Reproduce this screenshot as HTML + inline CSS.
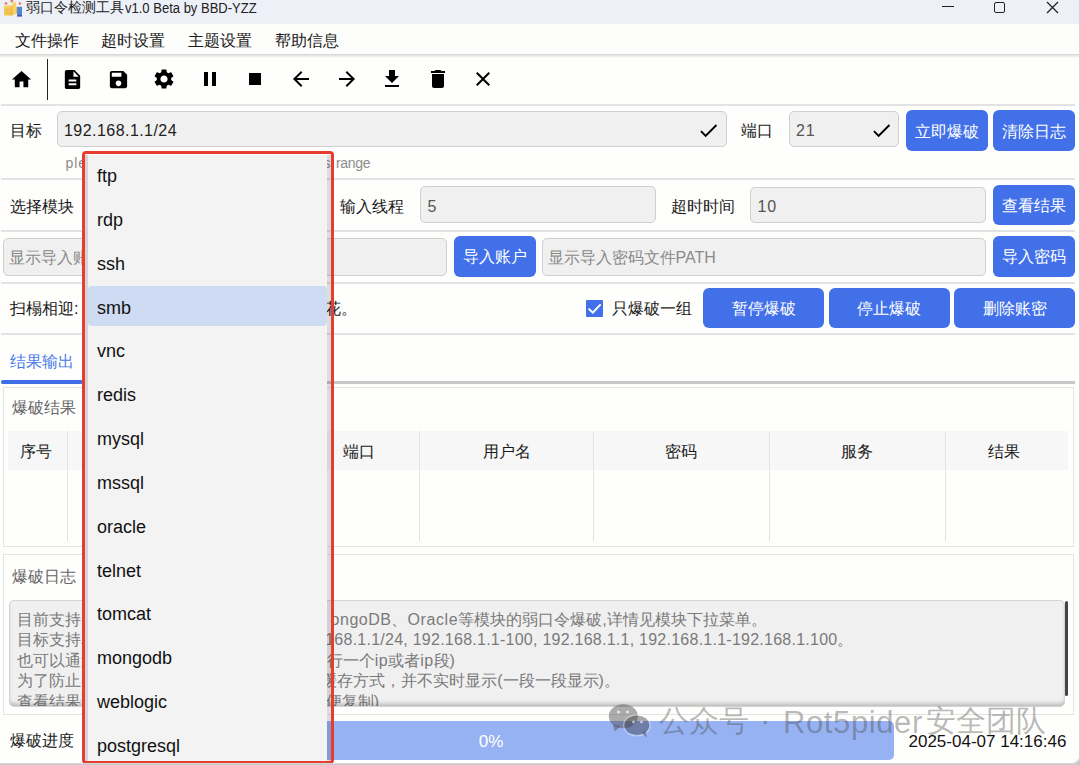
<!DOCTYPE html>
<html><head><meta charset="utf-8">
<style>
*{box-sizing:border-box;margin:0;padding:0}
html,body{width:1080px;height:765px;overflow:hidden;background:#fefefd;font-family:"Liberation Sans",sans-serif;color:#1a1a1a}
.a{position:absolute;white-space:nowrap}
.t{font-size:16px;line-height:20px}
.sep{position:absolute;left:1px;width:1074px;height:2px;background:#e3e3e3}
.inp{position:absolute;background:#f0f0f0;border:1px solid #cfcfcf;border-radius:5px}
.btn{position:absolute;background:#4170e8;border-radius:6px;color:#fff;font-size:16px;line-height:20px;text-align:center}
.ic{position:absolute}
.ph{color:#8a8a8a}
.hd{position:absolute;font-size:16px;line-height:20px;text-align:center}
.vl{position:absolute;top:431px;width:1px;height:110px;background:#e2e2e2}
.log{position:absolute;font-size:16px;line-height:20px;color:#7a7a7a}
.it{position:absolute;left:97px;font-size:18px;line-height:20px;letter-spacing:0px;color:#111}
</style></head><body>
<div class="a" style="left:0px;top:0px;width:1080px;height:23.7px;background:#edf0f6"></div>
<svg class="ic" style="left:0;top:0" width="24" height="18" viewBox="0 0 24 18">
<path d="M6 1.6l.7 1.1 1.2.7-1.2.7-.7 1.1-.7-1.1-1.2-.7 1.2-.7z" fill="#ec6b4d"/>
<path d="M11.8 -.8l.7 1.1 1.2.7-1.2.7-.7 1.1-.7-1.1-1.2-.7 1.2-.7z" fill="#ec6b4d"/>
<path d="M19.9 1.7l.6 1.1 1.1.7-1.1.7-.6 1.1-.6-1.1-1.1-.7 1.1-.7z" fill="#ec6b4d"/>
<rect x="4" y="5.6" width="9" height="10.1" rx="1.5" fill="#f5cf5c"/>
<path d="M12.3 14.4V4c0-1.2.9-2 1.9-2s2 .8 2 2v10.4z" fill="#f6d362"/>
<rect x="16.2" y="7" width="0.9" height="6.6" fill="#f0a83a"/>
<path d="M4.3 9.3h7.6M4.5 11.4h7.4M4.5 13.6h7.4" stroke="#ef9f45" stroke-width=".7"/>
<rect x="11.6" y="5.6" width=".8" height="10" fill="#efa447"/>
<rect x="17.1" y="6.8" width="4.9" height="8.2" fill="#4e86d8"/>
<rect x="17.1" y="14.9" width="4.9" height="1.7" fill="#4850a8"/>
</svg>
<div class="a a" style="left:26px;top:-1px;font-size:14px;line-height:16px;color:#222">弱口令检测工具</div>
<div class="a a" style="left:125.3px;top:0px;font-size:14px;line-height:16px;color:#222"><span style="display:inline-block;transform:scaleX(0.93);transform-origin:0 0">v1.0 Beta by BBD-YZZ</span></div>
<div class="a" style="left:942px;top:6px;width:12px;height:1.3px;background:#222"></div>
<div class="a" style="left:994px;top:2px;width:11px;height:11px;border:1.3px solid #222;border-radius:2px"></div>
<svg class="ic" style="left:1046px;top:1px" width="13" height="13" viewBox="0 0 13 13"><path d="M1 1L12 12M12 1L1 12" stroke="#222" stroke-width="1.3"/></svg>
<div class="a" style="left:0px;top:23.7px;width:1080px;height:30.3px;background:#fdfdfb"></div>
<div class="a" style="left:0px;top:53.7px;width:1080px;height:4.3px;background:linear-gradient(#d2d2d2,#e6e6e6 40%,#fefefd)"></div>
<div class="a t" style="left:15px;top:31px;">文件操作</div>
<div class="a t" style="left:101.3px;top:31px;">超时设置</div>
<div class="a t" style="left:188.3px;top:31px;">主题设置</div>
<div class="a t" style="left:275px;top:31px;">帮助信息</div>
<svg class="ic" style="left:10.0px;top:68.1px" width="23" height="23" viewBox="0 0 24 24"><path fill="#000" d="M10 20v-6h4v6h5v-8h3L12 3 2 12h3v8z"/></svg>
<svg class="ic" style="left:61.4px;top:67.65px" width="23" height="23" viewBox="0 0 24 24"><path fill="#000" d="M14 2H6c-1.1 0-1.99.9-1.99 2L4 20c0 1.1.89 2 1.99 2H18c1.1 0 2-.9 2-2V8l-6-6zm2 16H8v-2h8v2zm0-4H8v-2h8v2zm-3-5V3.5L18.5 9H13z"/></svg>
<svg class="ic" style="left:107.0px;top:67.75px" width="23" height="23" viewBox="0 0 24 24"><path fill="#000" d="M17 3H5c-1.11 0-2 .9-2 2v14c0 1.1.89 2 2 2h14c1.1 0 2-.9 2-2V7l-4-4zm-5 16c-1.66 0-3-1.34-3-3s1.34-3 3-3 3 1.34 3 3-1.34 3-3 3zm3-10H5V5h10v4z"/></svg>
<svg class="ic" style="left:152.2px;top:67.0px" width="24" height="24" viewBox="0 0 24 24"><path fill="#000" d="M19.14 12.94c.04-.3.06-.61.06-.94 0-.32-.02-.64-.07-.94l2.03-1.58c.18-.14.23-.41.12-.61l-1.92-3.32c-.12-.22-.37-.29-.59-.22l-2.39.96c-.5-.38-1.03-.7-1.620-.94l-.36-2.54c-.04-.24-.24-.41-.48-.41h-3.84c-.24 0-.43.17-.47.41l-.36 2.54c-.59.24-1.13.57-1.62.94l-2.39-.96c-.22-.08-.47 0-.59.22L2.74 8.87c-.12.21-.08.47.12.61l2.03 1.58c-.05.3-.09.63-.09.94s.02.64.07.94l-2.03 1.58c-.18.14-.23.41-.12.61l1.92 3.32c.12.22.37.29.59.22l2.39-.96c.5.38 1.03.7 1.62.94l.36 2.54c.05.24.24.41.48.41h3.840c.24 0 .44-.17.47-.41l.36-2.54c.59-.24 1.13-.56 1.62-.94l2.39.96c.22.08.47 0 .59-.22l1.92-3.32c.12-.22.07-.47-.12-.61l-2.01-1.58zM12 15.6c-1.98 0-3.6-1.62-3.6-3.6s1.62-3.6 3.6-3.6 3.6 1.62 3.6 3.6-1.62 3.6-3.6 3.6z"/></svg>
<svg class="ic" style="left:197.85px;top:67.0px" width="24" height="24" viewBox="0 0 24 24"><path fill="#000" d="M6 19h4V5H6v14zm8-14v14h4V5h-4z"/></svg>
<svg class="ic" style="left:243.45px;top:67.0px" width="24" height="24" viewBox="0 0 24 24"><path fill="#000" d="M6 6h12v12H6z"/></svg>
<svg class="ic" style="left:289.05px;top:67.0px" width="24" height="24" viewBox="0 0 24 24"><path fill="#000" d="M20 11H7.830l5.59-5.59L12 4l-8 8 8 8 1.41-1.41L7.83 13H20v-2z"/></svg>
<svg class="ic" style="left:334.5px;top:67.0px" width="24" height="24" viewBox="0 0 24 24"><path fill="#000" d="M12 4l-1.41 1.41L16.17 11H4v2h12.17l-5.58 5.59L12 20l8-8z"/></svg>
<svg class="ic" style="left:380.0px;top:67.0px" width="24" height="24" viewBox="0 0 24 24"><path fill="#000" d="M19 9h-4V3H9v6H5l7 7 7-7zM5 18v2h14v-2H5z"/></svg>
<svg class="ic" style="left:425.7px;top:67.0px" width="24" height="24" viewBox="0 0 24 24"><path fill="#000" d="M6 19c0 1.1.9 2 2 2h8c1.1 0 2-.9 2-2V7H6v12zM19 4h-3.5l-1-1h-5l-1 1H5v2h14V4z"/></svg>
<svg class="ic" style="left:471.35px;top:67.0px" width="24" height="24" viewBox="0 0 24 24"><path fill="#000" d="M19 6.41L17.59 5 12 10.59 6.41 5 5 6.41 10.59 12 5 17.59 6.41 19 12 13.41 17.59 19 19 17.59 13.41 12z"/></svg>
<div class="a" style="left:47px;top:59px;width:1.3px;height:41px;background:#222"></div>
<div class="sep" style="top:103.5px"></div>
<div class="a t" style="left:10px;top:121px;">目标</div>
<div class="inp" style="left:57px;top:111px;width:670px;height:36px"></div>
<div class="a t" style="left:64px;top:121px;color:#222;letter-spacing:.45px">192.168.1.1/24</div>
<svg class="ic" style="left:697px;top:118.5px" width="23" height="23" viewBox="0 0 24 24"><path fill="#000" d="M9 16.17L4.83 12l-1.42 1.41L9 19 21 7l-1.41-1.41z"/></svg>
<div class="a t" style="left:741px;top:121px;">端口</div>
<div class="inp" style="left:789px;top:111px;width:110px;height:36px"></div>
<div class="a t" style="left:796px;top:121px;color:#555;letter-spacing:.8px">21</div>
<svg class="ic" style="left:869.5px;top:118.5px" width="23" height="23" viewBox="0 0 24 24"><path fill="#000" d="M9 16.17L4.83 12l-1.42 1.41L9 19 21 7l-1.41-1.41z"/></svg>
<div class="btn" style="left:906px;top:110px;width:82px;height:41px;padding-top:12px">立即爆破</div>
<div class="btn" style="left:993px;top:110px;width:82px;height:41px;padding-top:12px">清除日志</div>
<div class="a a" style="left:65.6px;top:155px;font-size:14px;line-height:16px;letter-spacing:.9px;color:#8c8c8c">please input ip addres</div>
<div class="a a" style="left:323.5px;top:155px;font-size:14px;line-height:16px;color:#8c8c8c">s</div>
<div class="a a" style="left:336px;top:155px;font-size:14px;line-height:16px;letter-spacing:-.3px;color:#8c8c8c">range</div>
<div class="sep" style="top:178.2px"></div>
<div class="a t" style="left:9.5px;top:197px;">选择模块</div>
<div class="a t" style="left:339.5px;top:197px;">输入线程</div>
<div class="inp" style="left:419.5px;top:186px;width:236px;height:37px"></div>
<div class="a t" style="left:427.5px;top:197px;color:#555">5</div>
<div class="a t" style="left:670.5px;top:197px;">超时时间</div>
<div class="inp" style="left:750px;top:186.5px;width:236px;height:36px"></div>
<div class="a t" style="left:757.5px;top:197px;color:#555;letter-spacing:.8px">10</div>
<div class="btn" style="left:993px;top:185px;width:82px;height:40px;padding-top:10.5px">查看结果</div>
<div class="sep" style="top:230px"></div>
<div class="inp" style="left:2.5px;top:237.5px;width:444.5px;height:38px"></div>
<div class="a t ph" style="left:9px;top:248px;">显示导入账户文件PATH</div>
<div class="btn" style="left:453.5px;top:236px;width:82px;height:41px;padding-top:11px">导入账户</div>
<div class="inp" style="left:541.5px;top:237.5px;width:444.5px;height:38px"></div>
<div class="a t ph" style="left:547.5px;top:248px;">显示导入密码文件PATH</div>
<div class="btn" style="left:993px;top:236px;width:82px;height:41px;padding-top:11px">导入密码</div>
<div class="sep" style="top:281.5px"></div>
<div class="a t" style="left:10px;top:299px;">扫榻相迎: 欢迎</div>
<div class="a t" style="left:325px;top:299px;">花。</div>
<div class="a" style="left:586.3px;top:299.5px;width:17.2px;height:17.2px;background:#4170e8;border-radius:1px"></div>
<svg class="ic" style="left:586.3px;top:299.5px" width="17" height="17" viewBox="0 0 17 17"><path d="M2.6 8.6l4.2 4 7.8-8.2" stroke="#fff" stroke-width="2" fill="none"/></svg>
<div class="a t" style="left:611.5px;top:299px;">只爆破一组</div>
<div class="btn" style="left:703px;top:288px;width:121px;height:40px;padding-top:10.5px">暂停爆破</div>
<div class="btn" style="left:829px;top:288px;width:120.5px;height:40px;padding-top:10.5px">停止爆破</div>
<div class="btn" style="left:954px;top:288px;width:121px;height:40px;padding-top:10.5px">删除账密</div>
<div class="sep" style="top:332.5px"></div>
<div class="a t" style="left:10px;top:352px;color:#4a7aea">结果输出</div>
<div class="a" style="left:1px;top:380.5px;width:1074px;height:3.5px;background:#c8c8c8"></div>
<div class="a" style="left:1px;top:380px;width:82px;height:4px;background:#3f6fe6;border-radius:2px"></div>
<div class="a" style="left:2.5px;top:386.5px;width:1071px;height:160px;border:1px solid #e4e4e4"></div>
<div class="a t" style="left:12px;top:398px;color:#666">爆破结果</div>
<div class="a" style="left:8px;top:430.5px;width:1060px;height:39px;background:#f7f7f7"></div>
<div class="vl" style="left:67px"></div>
<div class="vl" style="left:298px"></div>
<div class="vl" style="left:418.5px"></div>
<div class="vl" style="left:593px"></div>
<div class="vl" style="left:769px"></div>
<div class="vl" style="left:944.5px"></div>
<div class="hd" style="left:6.7px;top:442.3px;width:59px">序号</div>
<div class="hd" style="left:67px;top:442.3px;width:231px">IP地址</div>
<div class="hd" style="left:298.8px;top:442.3px;width:121px">端口</div>
<div class="hd" style="left:419.5px;top:442.3px;width:174.5px">用户名</div>
<div class="hd" style="left:593.0px;top:442.3px;width:176.0px">密码</div>
<div class="hd" style="left:769.1px;top:442.3px;width:175.5px">服务</div>
<div class="hd" style="left:943px;top:442.3px;width:122px">结果</div>
<div class="a" style="left:2.5px;top:554px;width:1071px;height:161px;border:1px solid #e4e4e4"></div>
<div class="a t" style="left:12px;top:567px;color:#666">爆破日志</div>
<div class="a" style="left:9px;top:600px;width:1056px;height:107px;background:#f0f0f0;border-radius:5px"></div>
<div class="a" style="left:1065px;top:601px;width:3px;height:95px;background:#454545;border-radius:2px"></div>
<div class="a" style="left:9px;top:601px;width:1056px;height:105px;overflow:hidden">
<div class="a log" style="left:8px;top:9.0px;">目前支持FTP</div>
<div class="a log" style="left:321.6px;top:9.0px;"><span style="letter-spacing:.5px">ongoDB</span>、<span style="letter-spacing:.6px">Oracle</span>等模块的弱口令爆破,详情见模块下拉菜单。</div>
<div class="a log" style="left:8px;top:29.4px;">目标支持单个</div>
<div class="a log" style="left:316.2px;top:29.4px;"><span style="letter-spacing:.25px">168.1.1/24, 192.168.1.1-100, 192.168.1.1, 192.168.1.1-192.168.1.100</span>。</div>
<div class="a log" style="left:8px;top:49.8px;">也可以通过导</div>
<div class="a log" style="left:317.7px;top:49.8px;">行一个<span style="letter-spacing:.5px">ip</span>或者<span style="letter-spacing:.5px">ip</span>段)</div>
<div class="a log" style="left:8px;top:70.2px;">为了防止界面</div>
<div class="a log" style="left:312.2px;top:70.2px;">缓存方式，并不实时显示(一段一段显示)。</div>
<div class="a log" style="left:8px;top:90.6px;">查看结果请点</div>
<div class="a log" style="left:316.8px;top:90.6px;">便复制)</div>
</div>
<div class="a" style="left:9px;top:600px;width:1056px;height:107px;border:1px solid #d4d4d4;border-radius:5px;box-shadow:inset 0 -4px 4px -2px rgba(0,0,0,.25)"></div>
<div class="a t" style="left:10px;top:731px;">爆破进度</div>
<div class="a" style="left:87px;top:720.5px;width:807px;height:39px;background:#97b2f2;border-radius:5px"></div>
<div class="a" style="left:441px;top:731.5px;width:100px;text-align:center;font-size:17px;line-height:20px;color:#fff">0%</div>
<div class="a a" style="left:908.5px;top:731.5px;font-size:17px;line-height:20px;color:#111">2025-04-07 14:16:46</div>
<svg class="ic" style="left:600px;top:695px" width="60" height="50" viewBox="0 0 60 50">
<ellipse cx="23.3" cy="21.3" rx="14.5" ry="12" fill="rgba(70,70,70,.45)"/>
<path d="M13 29l1.5 7.5 6-5z" fill="rgba(70,70,70,.45)"/>
<circle cx="18.5" cy="17" r="1.6" fill="rgba(255,255,255,.7)"/><circle cx="27.5" cy="17" r="1.6" fill="rgba(255,255,255,.7)"/>
<ellipse cx="36.9" cy="30.3" rx="13.2" ry="10.6" fill="none" stroke="rgba(255,255,255,.35)" stroke-width="1.4"/>
<ellipse cx="36.9" cy="30.3" rx="12.4" ry="9.8" fill="rgba(60,60,70,.45)"/>
<path d="M42 38l4.5 4.5-.8-6.5z" fill="rgba(70,70,70,.5)"/>
<circle cx="33.5" cy="27" r="1.4" fill="rgba(255,255,255,.6)"/><circle cx="41.5" cy="27" r="1.4" fill="rgba(255,255,255,.6)"/>
</svg>
<div class="a a" style="left:659px;top:711px;font-size:29.5px;line-height:20px;color:rgba(70,70,70,.38)">公众号</div>
<div class="a a" style="left:760.3px;top:709.5px;font-size:30px;line-height:20px;color:rgba(70,70,70,.38)">·</div>
<div class="a a" style="left:783px;top:712.5px;font-size:31px;letter-spacing:.6px;line-height:20px;color:rgba(70,70,70,.38)">Rot5pider</div>
<div class="a a" style="left:925.7px;top:711px;font-size:29.5px;line-height:20px;color:rgba(70,70,70,.38)">安全团队</div>
<div class="a" style="left:85px;top:154.5px;width:246px;height:606px;background:#f3f3f4;background-clip:padding-box;border-left:3px solid #d5d5d5;border-right:4px solid rgba(0,0,0,.13)"></div>
<div class="a" style="left:88px;top:286.3px;width:239px;height:39.3px;background:#cfdbf3;border-radius:4px"></div>
<div class="it" style="top:166.1px">ftp</div>
<div class="it" style="top:209.9px">rdp</div>
<div class="it" style="top:253.7px">ssh</div>
<div class="it" style="top:297.6px">smb</div>
<div class="it" style="top:341.4px">vnc</div>
<div class="it" style="top:385.2px">redis</div>
<div class="it" style="top:429.0px">mysql</div>
<div class="it" style="top:472.9px">mssql</div>
<div class="it" style="top:516.7px">oracle</div>
<div class="it" style="top:560.5px">telnet</div>
<div class="it" style="top:604.4px">tomcat</div>
<div class="it" style="top:648.2px">mongodb</div>
<div class="it" style="top:692.0px">weblogic</div>
<div class="it" style="top:735.8px">postgresql</div>
<div class="a" style="left:81.5px;top:151px;width:252.8px;height:612.5px;border:3px solid #e63d2f;border-radius:4px"></div>
<div class="a" style="left:-20px;top:-20px;width:1099.5px;height:784px;border-radius:0 0 8px 8px;box-shadow:0 0 0 30px #c9c9c9;border:1px solid #d6d6d6;border-top:0;border-left:0"></div>
</body></html>
